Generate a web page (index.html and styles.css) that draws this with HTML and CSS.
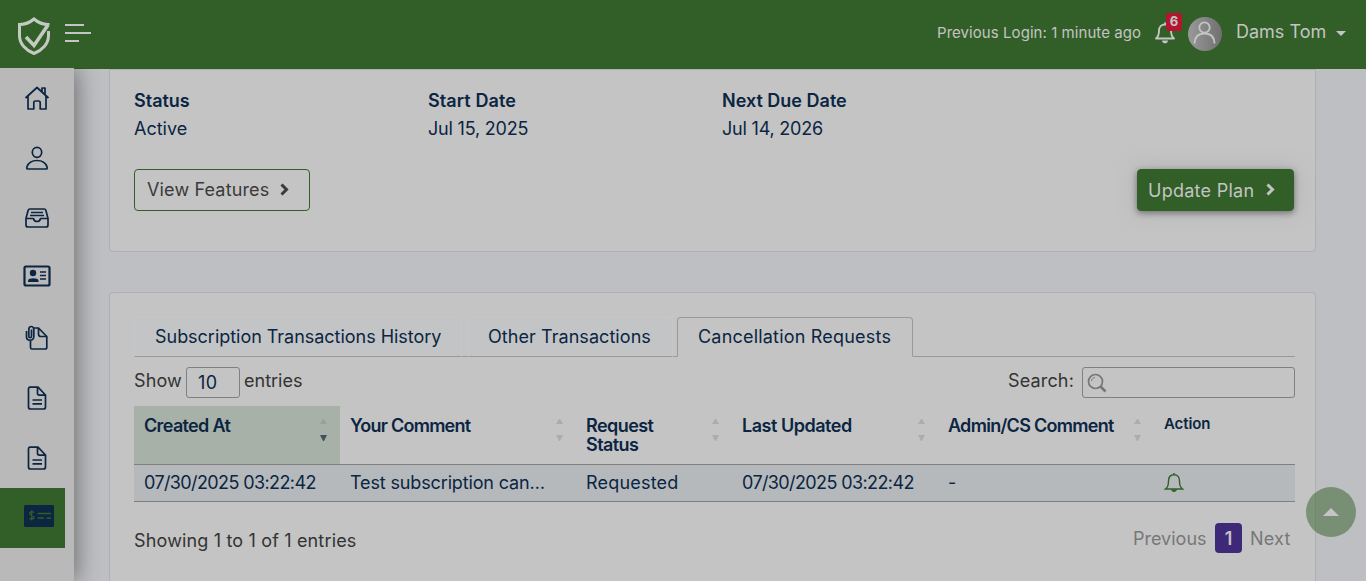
FILE: index.html
```
<!DOCTYPE html>
<html lang="en">
<head>
<meta charset="utf-8">
<title>Subscription</title>
<link rel="stylesheet" href="styles.css">
</head>
<body>
<header class="topbar">
  <svg class="logo" width="34" height="40" viewBox="0 0 34 40" fill="none" stroke="#c5c9c4" stroke-width="3">
    <path d="M31 9.500V8.500C25.500 8.500 20.500 6 17 3 13.500 6 8.500 8.500 2.500 8.500v11C2.500 28 9 34.500 17 37.500c8-3 14.500-9.500 14.500-18V15"/>
    <path d="M9 21l8 8.500L31 9" stroke-width="3.600"/>
  </svg>
  <div class="burger"><i></i><i></i><i></i></div>
  <div class="account">
    <span class="login">Previous Login: 1 minute ago</span>
    <div class="alerts">
      <svg width="20" height="24" viewBox="0 0 20 24" fill="none" stroke="#c4c4c4" stroke-width="1.900"><path d="M10 1.500v2M1 17.500h18c-2.500-2-3-3.500-3-8C16 5.800 13.500 3.500 10 3.500S4 5.800 4 9.500c0 4.500-.5 6-3 8z" stroke-linejoin="round"/><path d="M7 19.500h6c-.3 3.800-5.700 3.800-6 0z" fill="#c4c4c4" stroke="none"/></svg>
      <b class="badge">6</b>
    </div>
    <svg class="avatar" width="34" height="34" viewBox="0 0 34 34" fill="none"><defs><linearGradient id="av"><stop offset="0" stop-color="#999"/><stop offset="1" stop-color="#707070"/></linearGradient></defs><circle cx="17" cy="17" r="17" fill="url(#av)"/><circle cx="16.500" cy="10.500" r="5.200" stroke="#c4c4c4" stroke-width="1.800"/><path d="M6.500 26.500c.3-6.500 4.200-10 10-10s9.700 3.500 10 10" stroke="#c4c4c4" stroke-width="1.800"/></svg>
    <span class="user">Dams Tom</span>
    <i class="caret"></i>
  </div>
</header>
<div class="layout">
  <nav class="sidebar">
    <a><svg width="26" height="26" viewBox="0 0 26 26"><path d="M1.500 13L13 2.500 24.500 13M4 11.500V24h5.800v-6c0-1 .5-2 1.500-2h3.400c1 0 1.500 1 1.500 2v6H22V11.500M18 6.500V3h3v6.500"/></svg></a>
    <a><svg width="26" height="26" viewBox="0 0 26 26"><ellipse cx="13" cy="7.300" rx="4.700" ry="5"/><path d="M3.500 24c-1 0-.8-1.300-.5-2.300C4.500 17.500 8 15.500 13 15.500s8.500 2 10 6.200c.3 1 .5 2.300-.5 2.300z"/></svg></a>
    <a><svg width="26" height="26" viewBox="0 0 26 26"><path d="M2 13.500h7.500c.3 1.800 1.300 3 3.500 3s3.200-1.200 3.500-3H24M2 13.500v6.500c0 1.500.7 2 2 2h18c1.300 0 2-.5 2-2v-6.500L22 5.700C21.700 4.500 21 4 20 4H6C5 4 4.300 4.500 4 5.700zM7 7.500h12M6 10.500h14"/></svg></a>
    <a class="card-item"><svg width="28" height="24" viewBox="0 0 28 24"><rect x="1.500" y="2.500" width="25" height="19" rx="1.500" stroke-width="2.200"/><circle cx="10" cy="9" r="3.200" fill="#0b2542" stroke="none"/><path d="M5 18v-1.500c0-3 10.500-3 10.500 0V18z" fill="#0b2542" stroke="none"/><path d="M17 8h6M17 11.500h6M17 15h6" stroke-width="1.700"/></svg></a>
    <a><svg width="26" height="26" viewBox="0 0 26 26"><path d="M6.500 16v6.500c0 1 .5 1.500 1.500 1.500h13c1 0 1.800-.5 1.800-1.500V11.500L14.500 3H10M14.500 3v6c0 1.700.5 2.500 2.500 2.500h5.800"/><path d="M2.500 6v5.500c0 5 7.300 5 7.300 0V4.500c0-4-5-4-5 0V11c0 2.300 2.700 2.300 2.700 0V4.500"/></svg></a>
    <a><svg width="26" height="26" viewBox="0 0 26 26"><path d="M6 2.200h8L21.500 10v12c0 1.300-.7 2-2 2H6.500c-1.300 0-2-.7-2-2V4.200c0-1.300.5-2 1.500-2zM13.500 2.500v5.800c0 1.200.7 1.900 2 1.900h5.800M8.500 15h9.500M8.500 18.800h9.500"/></svg></a>
    <a><svg width="26" height="26" viewBox="0 0 26 26"><path d="M6 2.200h8L21.500 10v12c0 1.300-.7 2-2 2H6.500c-1.300 0-2-.7-2-2V4.200c0-1.300.5-2 1.500-2zM13.500 2.500v5.800c0 1.200.7 1.900 2 1.900h5.800M8.500 15h9.500M8.500 18.800h9.500"/></svg></a>
    <a class="active"><svg width="30" height="22" viewBox="0 0 30 22"><rect width="30" height="22" rx="1.500" fill="#0b2542" stroke="none"/><path d="M10 7.500C8 6 5.500 6.800 5.500 8.500c0 2.200 4.500 1.500 4.500 4 0 2-3 2.300-4.700.8M7.700 5.500v10M13.500 8.500H27M13.500 13h6.500M22.500 13H27" stroke="#315f27" stroke-width="1.300"/></svg></a>
  </nav>
  <main class="content">
    <section class="panel plan">
      <dl class="facts">
        <div><dt class="f1">Status</dt><dd class="v1">Active</dd></div>
        <div><dt class="f2">Start Date</dt><dd class="v2">Jul 15, 2025</dd></div>
        <div><dt class="f3">Next Due Date</dt><dd class="v2">Jul 14, 2026</dd></div>
      </dl>
      <div class="actions">
        <button class="btn outline"><span>View Features</span><svg width="9" height="13" viewBox="0 0 9 13" fill="none"><path d="M1.500 1.500l5 5-5 5" stroke="currentColor" stroke-width="3"/></svg></button>
        <button class="btn solid"><span>Update Plan</span><svg width="9" height="13" viewBox="0 0 9 13" fill="none"><path d="M1.500 1.500l5 5-5 5" stroke="currentColor" stroke-width="3"/></svg></button>
      </div>
    </section>
    <section class="panel history">
      <div class="tabs">
        <a class="t1"><span>Subscription Transactions History</span></a>
        <a class="t2"><span>Other Transactions</span></a>
        <a class="t3 current"><span>Cancellation Requests</span></a>
      </div>
      <div class="tools">
        <label class="length"><span class="show">Show</span><span class="select">10</span><span class="entries">entries</span></label>
        <label class="search"><span>Search:</span><span class="field"><svg width="20" height="20" viewBox="0 0 20 20" fill="none" stroke="#777"><circle cx="8.500" cy="8.500" r="7" stroke-width="1.700"/><path d="M4.500 8c.3-2 1.500-3.300 3.500-3.500" stroke-width="1"/><path d="M13.500 13.500l5 5" stroke-width="2.700"/></svg></span></label>
      </div>
      <div class="grid head">
        <div class="sorted"><span class="h1">Created At</span><i class="sort"></i></div>
        <div><span class="h2">Your Comment</span><i class="sort"></i></div>
        <div><span class="h3">Request Status</span><i class="sort"></i></div>
        <div><span class="h4">Last Updated</span><i class="sort"></i></div>
        <div><span class="h5">Admin/CS Comment</span><i class="sort"></i></div>
        <div><span class="h6">Action</span></div>
      </div>
      <div class="grid row">
        <div><span class="date">07/30/2025 03:22:42</span></div>
        <div><span class="comment">Test subscription can…</span></div>
        <div><span class="req">Requested</span></div>
        <div><span class="date">07/30/2025 03:22:42</span></div>
        <div><span>-</span></div>
        <div><svg width="20" height="22" viewBox="0 0 20 22" fill="none" stroke="#315f27" stroke-width="1.400"><path d="M10 1v1.500M1.500 17h17c-2.500-1.500-3-4-3-8 0-4-2-6.300-5.500-6.300S4.500 5 4.500 9c0 4-.5 6.500-3 8z"/><path d="M7 17.500h6c-.5 3.200-5.500 3.200-6 0z" fill="#315f27" stroke="none"/></svg></div>
      </div>
      <div class="foot">
        <span class="info">Showing 1 to 1 of 1 entries</span>
        <div class="pager"><span class="prev">Previous</span><b>1</b><span class="next">Next</span></div>
      </div>
    </section>
  </main>
</div>
<a class="to-top"><i></i></a>
</body>
</html>
```
FILE: styles.css
```
* { box-sizing: border-box; }
body { margin: 0; height: 581px; overflow: hidden; background: #bebfc2; font: 18px/22px Inter, "Liberation Sans", sans-serif; color: #0b2542; display: flex; flex-direction: column; }
span, dt, dd, b { white-space: nowrap; }
.topbar { height: 69px; flex: none; background: #315f27; color: #c4c4c4; display: flex; align-items: flex-start; padding-left: 17px; }
.logo { margin-top: 16px; }
.burger { margin: 24px 0 0 14px; display: flex; flex-direction: column; gap: 6px; }
.burger i { height: 2px; width: 26px; background: #c4c4c4; }
.burger i:first-child { width: 19px; }
.burger i:last-child { width: 14px; }
.account { margin-left: auto; height: 66px; display: flex; align-items: center; padding-right: 20px; }
.login { font-size: 15px; width: 204px; letter-spacing: .06px; }
.alerts { position: relative; margin-left: 14px; width: 20px; height: 24px; }
.badge { position: absolute; left: 11px; top: -8px; width: 16px; height: 18px; border-radius: 3px; background: #b5152f; font-size: 13px; line-height: 16px; text-align: center; }
.avatar { margin: 2px 14px 0 13px; }
.user { width: 92px; margin-top: -3px; }
.caret { border: 5px solid transparent; border-top-color: #c4c4c4; border-bottom: 0; margin-left: 8px; }
.layout { flex: 1; min-height: 0; display: flex; }
.sidebar { width: 74px; height: 513px; margin-top: -1px; background: #b9b9b9; flex: none; box-shadow: 2px 0 24px rgba(0,0,0,.45); clip-path: inset(0 -40px 0 0); }
.sidebar a { height: 60px; width: 65px; padding-left: 9px; display: flex; align-items: center; justify-content: center; }
.sidebar svg { fill: none; stroke: #0b2542; stroke-width: 1.7; stroke-linejoin: round; }
.sidebar a.card-item { padding-bottom: 4px; }
.sidebar a.active { background: #315f27; padding: 0 0 4px 13px; }
.content { flex: 1; min-height: 0; padding-left: 35px; display: flex; flex-direction: column; }
.panel { width: 1207px; background: #c4c4c4; border: 1px solid #aeb0b1; border-radius: 4px; padding: 0 20px 0 24px; }
.plan { height: 183px; flex: none; border-top-left-radius: 0; border-top-right-radius: 0; padding-top: 20px; }
.facts { margin: 0; display: grid; grid-template-columns: 294px 294px 1fr; }
dt { font-weight: 600; }
dd { margin: 6px 0 0; }
.f2 { letter-spacing: .1px; }
.v2 { letter-spacing: -.2px; }
.actions { display: flex; justify-content: space-between; margin-top: 29px; }
.btn { height: 42px; padding: 0 12px; border-radius: 4px; font: inherit; display: flex; align-items: center; border: 1px solid #315f27; background: none; color: #3a3a3a; }
.btn svg { margin-top: -2px; }
.outline { width: 176px; }
.outline span { width: 133px; text-align: left; letter-spacing: .15px; }
.solid { width: 157px; margin-right: 1px; padding: 0 10px; background: #315f27; color: #c4c4c4; box-shadow: 0 2px 6px rgba(0,0,0,.4), 0 0 20px rgba(140,135,150,.35); }
.solid span { width: 118px; text-align: left; letter-spacing: .27px; padding-top: 1px; }
.history { flex: 1; min-height: 0; margin-top: 40px; padding-top: 24px; border-bottom: 0; border-bottom-left-radius: 0; border-bottom-right-radius: 0; }
.tabs { display: flex; height: 40px; border-bottom: 1px solid #999; }
.tabs a { height: 40px; border: 1px solid #c5c8cb; border-bottom-color: #999; border-radius: 4px 4px 0 0; background: #c3c4c6; padding: 8px 20px; }
.t1 { width: 328px; margin-right: 6px; letter-spacing: -.03px; }
.t2 { width: 205px; margin-right: 4px; letter-spacing: .06px; }
.t2 span { margin-left: -1px; }
.t3 { width: 236px; letter-spacing: .2px; }
.tabs a.current { border-color: #999; border-bottom-color: #c4c4c4; background: #c4c4c4; }
.tools { display: flex; justify-content: space-between; margin-top: 10px; height: 31px; }
.length, .search { display: flex; line-height: 27px; color: #333; }
.show { width: 52px; letter-spacing: .15px; }
.select { width: 54px; height: 31px; border: 1px solid #808080; border-radius: 3px; padding-left: 11px; line-height: 30px; color: #0b2542; margin-right: 4px; letter-spacing: .5px; }
.search > span:first-child { width: 74px; letter-spacing: .15px; }
.field { width: 213px; height: 31px; border: 1px solid #808080; border-radius: 3px; padding: 5px 4px; display: flex; }
.grid { display: grid; grid-template-columns: 206px 236px 156px 206px 216px 1fr; }
.grid > div { padding-left: 10px; }
.head { height: 59px; margin-top: 8px; font-weight: 600; line-height: 19px; border-bottom: 1px solid #808080; }
.head > div { display: flex; justify-content: space-between; padding: 10px 13px 0 10px; }
.sorted { background: #a7b1a7; }
.h1 { letter-spacing: -.65px; }
.h2 { letter-spacing: -.75px; }
.h3 { white-space: normal; width: 80px; letter-spacing: -.57px; }
.h4 { letter-spacing: -.48px; }
.h5 { letter-spacing: -.7px; }
.h6 { font-size: 15px; line-height: 16px; letter-spacing: -.1px; }
.sort { width: 7px; height: 22px; margin-top: 3px; display: flex; flex-direction: column; justify-content: space-between; }
.sort::before, .sort::after { content: ""; border: 3.5px solid transparent; border-top: 0; border-bottom: 5px solid #aaacb0; }
.sort::after { border-top: 6px solid #aaacb0; border-bottom: 0; }
.sorted .sort::before { border-bottom-color: #98a19a; }
.sorted .sort::after { border-top-color: #3e515f; }
.row { height: 37px; background: #b5b9bc; line-height: 36px; border-bottom: 1px solid #808080; }
.row svg { margin-top: 7px; display: block; }
.date { letter-spacing: -.61px; }
.comment { letter-spacing: -.14px; }
.req { letter-spacing: .2px; }
.foot { display: flex; justify-content: space-between; margin-top: 21px; color: #333; }
.info { margin-top: 7px; letter-spacing: .16px; }
.pager { display: flex; line-height: 32px; padding-right: 5px; color: #777; }
.pager b { width: 27px; height: 30px; border-radius: 4px; background: #3e2878; color: #c4c4c4; text-align: center; margin: 0 8px; font-weight: 600; }
.prev { width: 74px; } .next { width: 40px; letter-spacing: .2px; }
.to-top { position: absolute; left: 1306px; top: 487px; width: 50px; height: 50px; border-radius: 50%; background: rgba(49,95,39,.5); display: flex; align-items: center; justify-content: center; }
.to-top i { border: 8px solid transparent; border-top: 0; border-bottom-color: #c4c4c4; }
```
